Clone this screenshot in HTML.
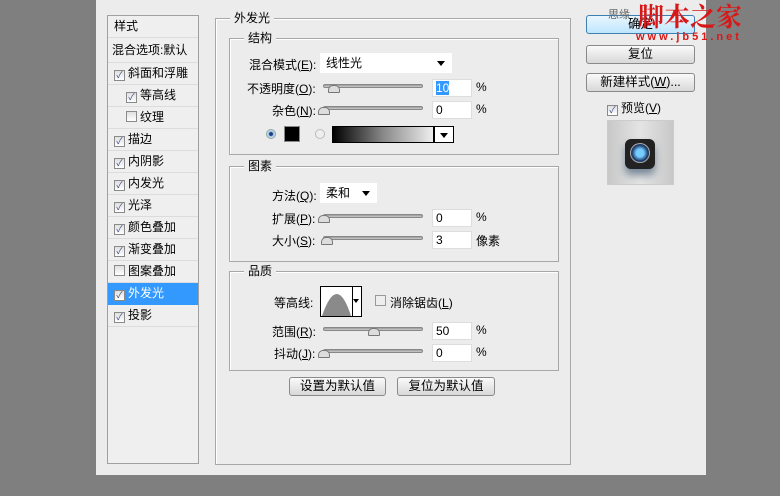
<!DOCTYPE html>
<html><head><meta charset="utf-8"><style>
*{margin:0;padding:0;box-sizing:border-box}
body{width:780px;height:496px;background:#7f7f7f;position:relative;overflow:hidden;font-family:"Liberation Sans","Noto Sans CJK SC",sans-serif;font-size:12px;color:#000}
.a{position:absolute;white-space:nowrap}
#dlg{position:absolute;left:96px;top:0;width:610px;height:475px;background:#ececec}
.box{position:absolute;border:1px solid #a0a0a0}
.gb{position:absolute;border:1px solid #a8a8a8;box-shadow:1px 1px 0 #fff inset}
.gt{position:absolute;top:-9px;left:14px;background:#ececec;padding:0 4px;line-height:16px}
.row{position:absolute;left:0;width:90px;height:22px;line-height:21px;border-bottom:1px solid #dcdcdc;background:#efefef;padding-left:6px}
.cb{display:inline-block;width:11px;height:11px;border:1px solid #8a8a8a;background:linear-gradient(#e0e0e0,#fff);vertical-align:-1px;margin-right:3px;position:relative;font-size:9px;line-height:9px;text-align:center;color:#3a4a8a}
.track{position:absolute;height:4px;border-radius:2px;background:linear-gradient(#999,#ccc);border:1px solid #888}
.th{position:absolute;width:12px;height:8px;background:#ddd;border:1px solid #777;border-radius:5px 5px 1px 1px}
.inp{position:absolute;width:40px;height:18px;background:#fff;border:1px solid #ddd;padding-left:3px;line-height:17px}
.btn{position:absolute;height:19px;border:1px solid #8a8a8a;border-radius:3px;background:linear-gradient(#fafafa,#d8d8d8);text-align:center;line-height:17px;font-size:12.5px}
.sel{position:absolute;background:#fff;height:20px;line-height:20px;padding-left:6px}
.arr{position:absolute;right:7px;top:8px;border-left:4px solid transparent;border-right:4px solid transparent;border-top:5px solid #000}
</style></head><body>
<div id="dlg"></div>

<!-- left list -->
<div class="box" style="left:107px;top:15px;width:92px;height:449px;background:#efefef">
 <div class="row" style="top:0;height:22px">样式</div>
 <div class="row" style="top:22px;height:25px;line-height:24px;padding-left:4px">混合选项:默认</div>
 <div class="row" style="top:47px"><span class="cb">✓</span>斜面和浮雕</div>
 <div class="row" style="top:69px;padding-left:18px"><span class="cb">✓</span>等高线</div>
 <div class="row" style="top:91px;padding-left:18px"><span class="cb"></span>纹理</div>
 <div class="row" style="top:113px"><span class="cb">✓</span>描边</div>
 <div class="row" style="top:135px"><span class="cb">✓</span>内阴影</div>
 <div class="row" style="top:157px"><span class="cb">✓</span>内发光</div>
 <div class="row" style="top:179px"><span class="cb">✓</span>光泽</div>
 <div class="row" style="top:201px"><span class="cb">✓</span>颜色叠加</div>
 <div class="row" style="top:223px"><span class="cb">✓</span>渐变叠加</div>
 <div class="row" style="top:245px"><span class="cb"></span>图案叠加</div>
 <div class="row" style="top:267px;background:#3399ff;color:#fff;border-color:#3399ff"><span class="cb">✓</span>外发光</div>
 <div class="row" style="top:289px"><span class="cb">✓</span>投影</div>
</div>

<!-- main group -->
<div class="gb" style="left:215px;top:18px;width:356px;height:447px"><div class="gt">外发光</div></div>

<div class="gb" style="left:229px;top:38px;width:330px;height:117px"><div class="gt">结构</div></div>
<div class="a" style="left:249px;top:56px">混合模式(<u>E</u>):</div>
<div class="sel" style="left:320px;top:53px;width:132px">线性光<span class="arr"></span></div>
<div class="a" style="left:247px;top:80px">不透明度(<u>O</u>):</div>
<div class="track" style="left:323px;top:84px;width:100px"></div><div class="th" style="left:328px;top:85px"></div>
<div class="inp" style="left:432px;top:79px"><span style="background:#3399ff;color:#fff">10</span></div><div class="a" style="left:476px;top:80px">%</div>
<div class="a" style="left:272px;top:102px">杂色(<u>N</u>):</div>
<div class="track" style="left:323px;top:106px;width:100px"></div><div class="th" style="left:318px;top:107px"></div>
<div class="inp" style="left:432px;top:101px">0</div><div class="a" style="left:476px;top:102px">%</div>
<div class="a" style="left:266px;top:129px;width:10px;height:10px;border-radius:50%;background:radial-gradient(#1a3f8f 30%,#9bc 40%,#dde 70%);border:1px solid #8aa"></div>
<div class="a" style="left:284px;top:126px;width:16px;height:16px;background:#000;border:1px solid #888"></div>
<div class="a" style="left:315px;top:129px;width:10px;height:10px;border-radius:50%;border:1px solid #bbb;background:#eee"></div>
<div class="a" style="left:332px;top:126px;width:102px;height:17px;border:1px solid #000;background:linear-gradient(90deg,#000,#888 50%,#eee)"></div>
<div class="a" style="left:434px;top:126px;width:20px;height:17px;border:1px solid #000;background:#fff"><span class="arr" style="right:5px;top:6px"></span></div>

<div class="gb" style="left:229px;top:166px;width:330px;height:96px"><div class="gt">图素</div></div>
<div class="a" style="left:272px;top:187px">方法(<u>Q</u>):</div>
<div class="sel" style="left:320px;top:183px;width:57px">柔和<span class="arr"></span></div>
<div class="a" style="left:272px;top:210px">扩展(<u>P</u>):</div>
<div class="track" style="left:323px;top:214px;width:100px"></div><div class="th" style="left:318px;top:215px"></div>
<div class="inp" style="left:432px;top:209px">0</div><div class="a" style="left:476px;top:210px">%</div>
<div class="a" style="left:272px;top:232px">大小(<u>S</u>):</div>
<div class="track" style="left:323px;top:236px;width:100px"></div><div class="th" style="left:321px;top:237px"></div>
<div class="inp" style="left:432px;top:231px">3</div><div class="a" style="left:476px;top:232px">像素</div>

<div class="gb" style="left:229px;top:271px;width:330px;height:100px"><div class="gt">品质</div></div>
<div class="a" style="left:274px;top:294px">等高线:</div>
<div class="a" style="left:320px;top:286px;width:42px;height:31px;border:1px solid #000;background:#fff">
<svg width="32" height="29" style="position:absolute;left:0;top:0"><path d="M1 29 Q16 -15 30 29 Z" fill="#8a8a8a"/></svg>
<div style="position:absolute;left:31px;top:0;width:1px;height:29px;background:#000"></div>
<span class="arr" style="right:2px;top:12px;border-width:3px 3px 0;border-top-width:4px"></span></div>
<div class="a" style="left:375px;top:295px;width:11px;height:11px;border:1px solid #999;background:#eee"></div>
<div class="a" style="left:390px;top:294px">消除锯齿(<u>L</u>)</div>
<div class="a" style="left:272px;top:323px">范围(<u>R</u>):</div>
<div class="track" style="left:323px;top:327px;width:100px"></div><div class="th" style="left:368px;top:328px"></div>
<div class="inp" style="left:432px;top:322px">50</div><div class="a" style="left:476px;top:323px">%</div>
<div class="a" style="left:274px;top:345px">抖动(<u>J</u>):</div>
<div class="track" style="left:323px;top:349px;width:100px"></div><div class="th" style="left:318px;top:350px"></div>
<div class="inp" style="left:432px;top:344px">0</div><div class="a" style="left:476px;top:345px">%</div>

<div class="btn" style="left:289px;top:377px;width:97px">设置为默认值</div>
<div class="btn" style="left:397px;top:377px;width:98px">复位为默认值</div>

<!-- right -->
<div class="btn" style="left:586px;top:15px;width:109px;border-color:#3c7fb1;background:linear-gradient(#eaf6fd,#bee6fd)">确定</div>
<div class="btn" style="left:586px;top:45px;width:109px">复位</div>
<div class="btn" style="left:586px;top:73px;width:109px">新建样式(<u>W</u>)...</div>
<div class="a" style="left:607px;top:99px"><span class="cb">✓</span>预览(<u>V</u>)</div>
<div class="a" style="left:607px;top:120px;width:67px;height:65px;background:linear-gradient(90deg,#c8c8c8,#e4e4e4 50%,#c8c8c8);border:1px solid #ccc">
 <div style="position:absolute;left:17px;top:18px;width:30px;height:30px;background:#222;border-radius:6px;box-shadow:0 6px 8px #789"></div>
 <div style="position:absolute;left:22px;top:22px;width:20px;height:20px;border-radius:50%;background:radial-gradient(#7cf 30%,#247 60%,#111);border:1px solid #aaa"></div>
</div>

<!-- watermark -->
<div class="a" style="left:608px;top:6px;color:#666;font-size:11px">思缘</div>
<div class="a" style="left:638px;top:1px;color:#d81818;font-size:26px;font-family:'Noto Serif CJK SC',serif;font-weight:bold;line-height:30px">脚本之家</div>
<div class="a" style="left:636px;top:31px;color:#d81818;font-size:11px;letter-spacing:3px;font-weight:bold">www.jb51.net</div>
</body></html>
